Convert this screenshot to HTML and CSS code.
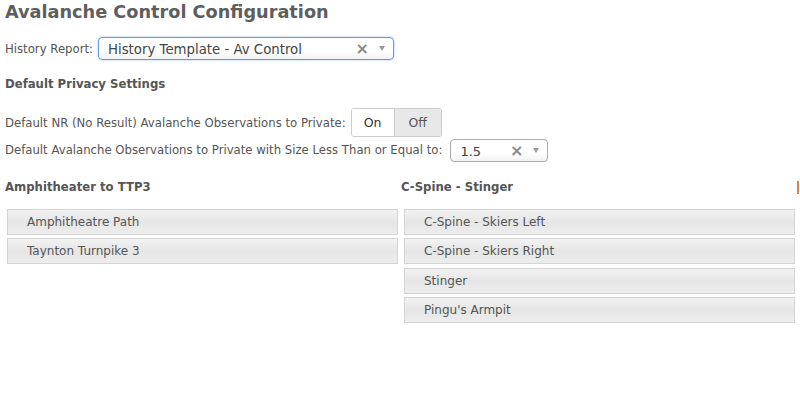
FILE: index.html
```html
<!DOCTYPE html>
<html>
<head>
<meta charset="utf-8">
<link rel="stylesheet" href="styles.css">
</head>
<body>
<div class="page">
  <h1 class="title">Avalanche Control Configuration</h1>
  <div class="row report-row">
    <span class="label">History Report:</span>
    <div class="select select-wide focused">
      <span class="select-value">History Template - Av Control</span>
      <span class="select-clear">×</span>
      <span class="select-arrow"></span>
    </div>
  </div>
  <h2 class="section">Default Privacy Settings</h2>
  <div class="row nr-row">
    <span class="label">Default NR (No Result) Avalanche Observations to Private:</span>
    <div class="toggle">
      <span class="toggle-opt active">On</span>
      <span class="toggle-opt">Off</span>
    </div>
  </div>
  <div class="row size-row">
    <span class="label">Default Avalanche Observations to Private with Size Less Than or Equal to:</span>
    <div class="select select-small">
      <span class="select-value">1.5</span>
      <span class="select-clear">×</span>
      <span class="select-arrow"></span>
    </div>
  </div>
  <div class="columns">
    <div class="col">
      <h3 class="col-title">Amphitheater to TTP3</h3>
      <ul class="list">
        <li class="item">Amphitheatre Path</li>
        <li class="item">Taynton Turnpike 3</li>
      </ul>
    </div>
    <div class="col">
      <h3 class="col-title">C-Spine - Stinger</h3>
      <ul class="list">
        <li class="item">C-Spine - Skiers Left</li>
        <li class="item">C-Spine - Skiers Right</li>
        <li class="item">Stinger</li>
        <li class="item">Pingu's Armpit</li>
      </ul>
    </div>
    <div class="col col-cut">
      <h3 class="col-title">&nbsp;</h3>
    </div>
  </div>
</div>
</body>
</html>
```
FILE: styles.css
```css
html, body {
  margin: 0;
  padding: 0;
  background: #fff;
  overflow: hidden;
}
body {
  font-family: "DejaVu Sans", Verdana, sans-serif;
  font-size: 11.7px;
  color: #555;
  width: 800px;
  height: 410px;
}
.page {
  padding: 0 0 0 5px;
}
.title {
  margin: 0;
  padding-top: 1px;
  font-size: 17.7px;
  line-height: 22px;
  font-weight: bold;
  color: #5e5e5e;
}
.row {
  display: flex;
  align-items: center;
}
.label {
  white-space: nowrap;
}
.report-row {
  margin-top: 14px;
}
.report-row .label {
  margin-right: 5px;
}
.select {
  display: flex;
  align-items: center;
  box-sizing: border-box;
  height: 23px;
  border: 1px solid #aaa;
  border-radius: 4px;
  background: linear-gradient(#fff 60%, #f2f2f2);
  padding: 0 8px 0 9px;
  color: #444;
}
.select.focused {
  border-color: #5b9be6;
  box-shadow: 0 0 3px rgba(82, 150, 230, 0.45);
}
.select-wide {
  width: 296px;
  font-size: 13.3px;
}
.select-small {
  width: 98px;
  margin-left: 8px;
  margin-top: 1px;
  font-size: 13px;
}
.select-value {
  flex: 1;
  white-space: nowrap;
  padding-top: 2px;
}
.select-clear {
  color: #888;
  font-size: 16px;
  font-weight: bold;
  line-height: 1;
  margin-right: 10px;
}
.select-arrow {
  width: 0;
  height: 0;
  border-left: 3px solid transparent;
  border-right: 3px solid transparent;
  border-top: 5px solid #999;
}
.section {
  margin: 16px 0 0 0;
  font-size: 11.7px;
  line-height: 16px;
  font-weight: bold;
  color: #555;
}
.nr-row {
  margin-top: 16px;
}
.nr-row .label {
  margin-right: 5px;
}
.toggle {
  display: flex;
  height: 29px;
  box-sizing: border-box;
  border: 1px solid #ccc;
  border-radius: 3px;
  overflow: hidden;
  font-size: 12.5px;
}
.toggle-opt {
  display: flex;
  align-items: center;
  justify-content: center;
  width: 46px;
  background: #e8e8e8;
  color: #555;
}
.toggle-opt.active {
  width: 42px;
  background: #fff;
  color: #333;
  border-right: 1px solid #ccc;
}
.size-row {
  margin-top: 1px;
}
.columns {
  display: grid;
  grid-template-columns: 396px 396px 396px;
  margin-top: 17px;
  overflow: hidden;
  width: 795px;
}
.col-title {
  margin: 0;
  font-size: 11.7px;
  line-height: 16px;
  font-weight: bold;
  color: #555;
  white-space: nowrap;
}
.col-cut .col-title {
  border-left: 2px solid #c8865a;
  height: 13px;
  margin-top: 2px;
}
.list {
  list-style: none;
  margin: 14px 0 0 2px;
  padding: 0;
  display: flex;
  flex-direction: column;
  gap: 3.3px;
}
.col:nth-child(2) .list {
  margin-left: 3px;
}
.item {
  box-sizing: border-box;
  width: 391px;
  height: 26px;
  border: 1px solid #d4d4d4;
  background: linear-gradient(#f2f2f2, #e6e6e6 50%, #ededed);
  padding-left: 19px;
  display: flex;
  align-items: center;
  font-size: 12px;
  color: #555;
}
```
